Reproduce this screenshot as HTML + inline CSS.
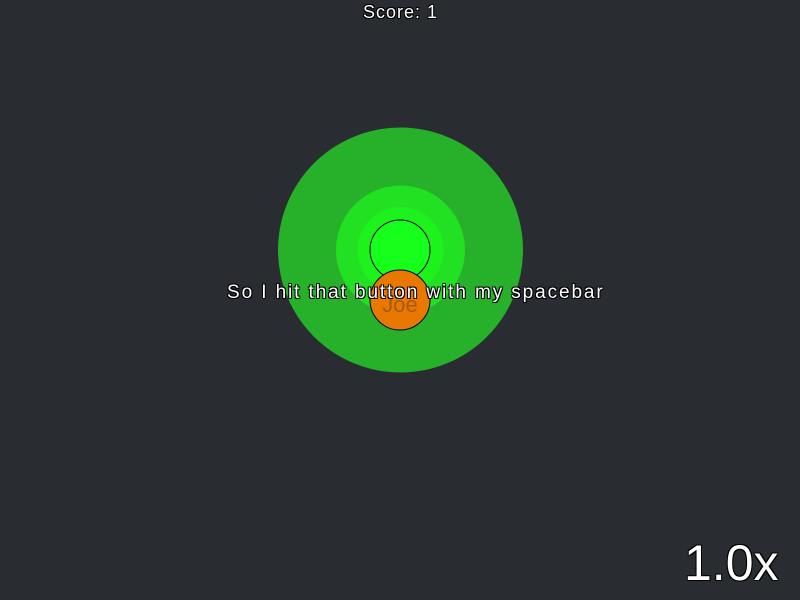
<!DOCTYPE html>
<html><head><style>
html,body{margin:0;padding:0;width:800px;height:600px;overflow:hidden;background:#292c31;}
.t{position:absolute;font-family:"Liberation Sans",sans-serif;color:#fff;white-space:nowrap;
text-shadow:-1px -1px 0 #000,1px -1px 0 #000,-1px 1px 0 #000,1px 1px 0 #000;}
</style></head><body>
<svg width="800" height="600" style="position:absolute;left:0;top:0">
<circle cx="400.5" cy="250" r="122.5" fill="#27b02a"/>
<circle cx="400.5" cy="250" r="64.5" fill="#22e022"/>
<circle cx="400.5" cy="250" r="43" fill="#1df21d"/>
<circle cx="400" cy="250" r="30" fill="#15ff1a" stroke="#000" stroke-width="1"/>
<circle cx="400" cy="300" r="30" fill="#e87800" stroke="#000" stroke-width="1"/>
<text x="400" y="312" text-anchor="middle" font-family="Liberation Sans,sans-serif" font-size="22" fill="#a85a10">Joe</text>
</svg>
<div class="t" style="left:363px;top:2px;font-size:18px;letter-spacing:1px">Score: 1</div>
<div class="t" style="left:227px;top:282px;font-size:19px;letter-spacing:1.9px">So I hit that button with my spacebar</div>
<div class="t" style="left:684px;top:534px;font-size:50px">1.0x</div>
</body></html>
